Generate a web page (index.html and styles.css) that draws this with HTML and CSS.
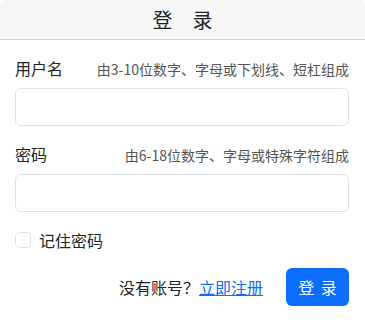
FILE: index.html
```html
<!DOCTYPE html>
<html lang="zh-CN">
<head>
    <meta charset="UTF-8">
    <meta name="viewport" content="width=device-width, initial-scale=1.0">
    <title>登录</title>
    <link rel="stylesheet" href="styles.css">
</head>
<body>
    <div class="card">
        <div class="card-header">登录</div>
        <form class="card-body" id="loginForm">
            <div class="field">
                <div class="field-top">
                    <label for="username">用户名</label>
                    <span class="hint">由3-10位数字、字母或下划线、短杠组成</span>
                </div>
                <input type="text" id="username" name="username">
            </div>

            <div class="field">
                <div class="field-top">
                    <label for="password">密码</label>
                    <span class="hint">由6-18位数字、字母或特殊字符组成</span>
                </div>
                <input type="password" id="password" name="password">
            </div>

            <div class="remember">
                <input type="checkbox" id="remember" name="remember">
                <label for="remember">记住密码</label>
            </div>

            <div class="actions">
                <span class="register">没有账号？<a href="#">立即注册</a></span>
                <button type="submit">登 录</button>
            </div>
        </form>
    </div>
</body>
</html>
```

FILE: styles.css
```css
body {
    font-family: "Noto Sans CJK SC", "Noto Sans", sans-serif;
    font-size: 16px;
    line-height: 24px;
    color: #212529;
    background-color: #fff;
    margin: 0;
    padding: 0;
}

.card {
    width: 365px;
    height: 322px;
    box-sizing: border-box;
    border-radius: 6px;
    overflow: hidden;
    background-color: #fff;
}

.card-header {
    height: 39px;
    line-height: 39px;
    background-color: #f7f7f7;
    border-bottom: 1px solid #cfcfcf;
    text-align: center;
    font-size: 20px;
    letter-spacing: 20px;
    padding-left: 20px;
}

.card-body {
    display: flex;
    flex-direction: column;
    gap: 16px;
    padding: 16px 16px 16px 15px;
}

.field {
    display: flex;
    flex-direction: column;
    gap: 7px;
}

.field-top {
    display: flex;
    justify-content: space-between;
    align-items: baseline;
}

.hint {
    font-size: 14px;
    color: #555;
}

.field input {
    height: 38px;
    box-sizing: border-box;
    border: 1px solid #dee2e6;
    border-radius: 6px;
    padding: 6px 12px;
    font-size: 16px;
}

.remember {
    display: flex;
    align-items: center;
    gap: 8px;
}

.remember input {
    appearance: none;
    width: 16px;
    height: 16px;
    margin: 0;
    border: 1px solid #dee2e6;
    border-radius: 4px;
}

.actions {
    display: flex;
    justify-content: flex-end;
    align-items: center;
    gap: 23px;
}

.register a {
    color: #0d6efd;
}

button {
    width: 63px;
    height: 38px;
    padding: 6px 0;
    background-color: #0d6efd;
    color: #fff;
    border: none;
    border-radius: 6px;
    font-family: inherit;
    font-size: 16px;
    word-spacing: 3px;
    cursor: pointer;
}
```
